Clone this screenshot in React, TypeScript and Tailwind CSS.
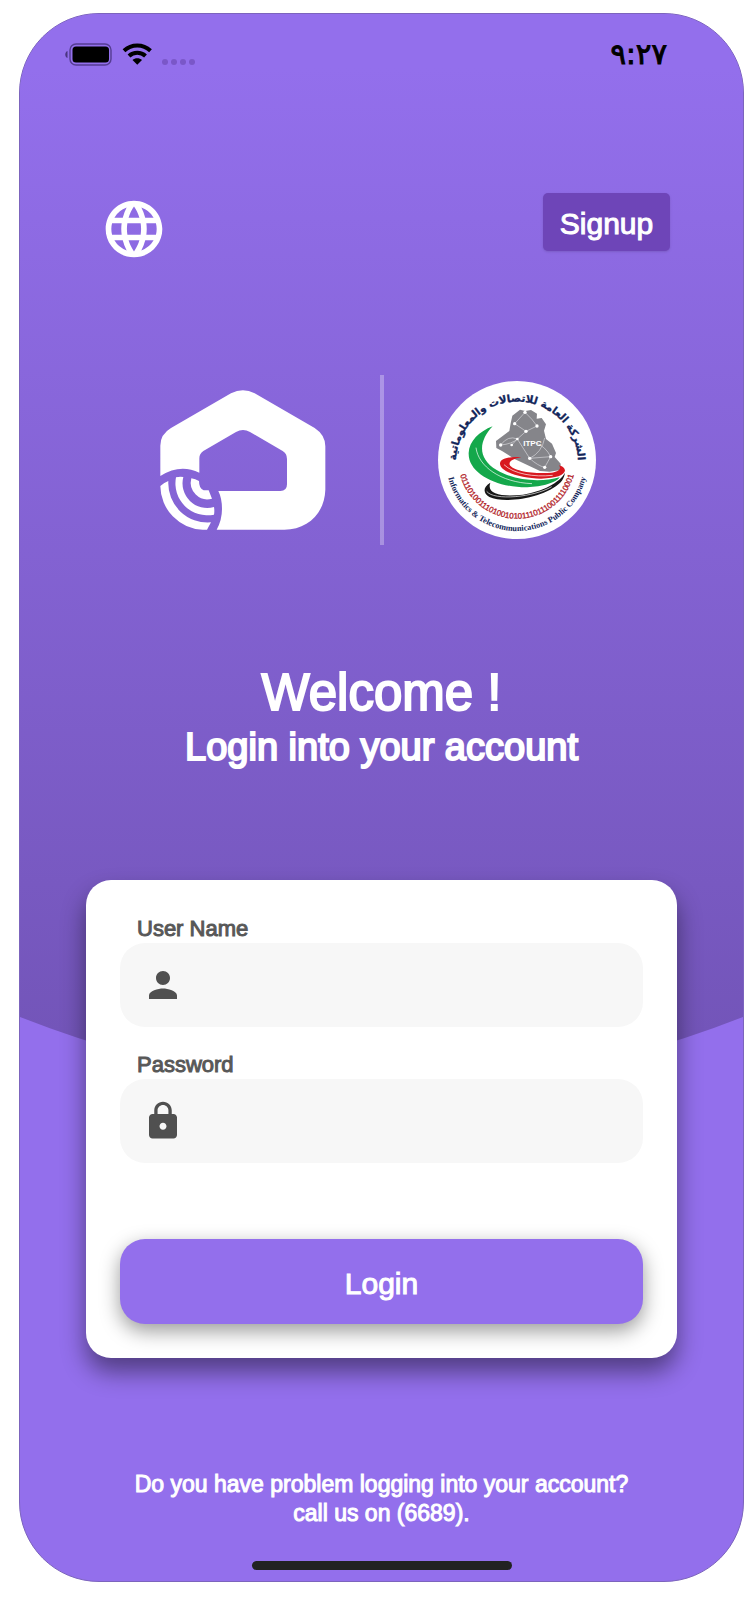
import type { FormEvent, ReactNode } from 'react'
import { useState } from 'react'
import { MdLanguage, MdLock, MdPerson } from 'react-icons/md'

// ============================================================================
// TYPES
// ============================================================================

interface FieldProps {
  id: string
  label: string
  type: 'text' | 'password'
  icon: ReactNode
  value: string
  onChange: (value: string) => void
}

// ============================================================================
// STATUS BAR
// ============================================================================

function StatusBar(): ReactNode {
  return (
    <div className="flex h-6 items-center justify-between pr-[76px] pl-11 text-black">
      <svg viewBox="0 0 132 24" className="h-6 w-[132px]" aria-hidden="true">
        {/* Battery */}
        <path d="M3.500 9C0.500 10 0.500 15 3.500 16Z" fill="#4b3581" />
        <rect x="6" y="2" width="41" height="21" rx="6" fill="none" stroke="#553d92" strokeWidth="1.4" />
        <rect x="8.500" y="4.500" width="36.500" height="16" rx="3.500" />
        {/* Wifi */}
        <g fill="none" stroke="#000" strokeWidth="4">
          <path d="M60 8.700C67.500 1.700 79 1.700 86.500 8.700" />
          <path d="M65 14C69.500 9.700 77 9.700 81.500 14" />
        </g>
        <path d="M68.500 18C71 15.600 75.500 15.600 78 18L73.250 22.800Z" />
        {/* Signal */}
        <g fill="#7a57c8">
          <circle cx="101" cy="20" r="3" />
          <circle cx="110" cy="20" r="3" />
          <circle cx="119" cy="20" r="3" />
          <circle cx="128" cy="20" r="3" />
        </g>
      </svg>
      <time dir="ltr" className="font-['DejaVu_Sans',sans-serif] text-[29px] leading-6 [-webkit-text-stroke:1px]">
        <bdo dir="ltr">٩:٢٧</bdo>
      </time>
    </div>
  )
}

// ============================================================================
// LOGOS
// ============================================================================

function HomeLogo(): ReactNode {
  return (
    <svg viewBox="62 85 498 420" className="h-[140px] w-[166px]" fill="#fff" aria-hidden="true">
      <path d="M63 343V252Q63 218 95 199L275 95Q311 77 346 95L526 199Q558 220 558 254V384C556 455 505 504 435 504H232Q248 475 248 442Q248 410 237 388H423Q443 388 443 368V292Q443 276 430 268L332 211Q311 199 290 211L192 268Q180 276 180 290V333Q122 305 63 343Z" />
      <path d="M63 373Q74 363 87 358A118 118 0 0 0 215 482L203 504H190A132 132 0 0 1 63 373Z" />
      <path d="M110 347Q121 344 132 346A74 74 0 0 0 224 436Q226 448 224 459A96 96 0 0 1 110 347Z" />
      <path d="M156 350Q168 352 179 358Q179 381 193 386H208L218 411A50 50 0 0 1 156 350Z" />
    </svg>
  )
}

function ItpcLogo(): ReactNode {
  return (
    <svg viewBox="30 30 474 474" className="size-[158px]" role="img" aria-label="ITPC">
      <defs>
        <path id="arc-top" d="M84 275A183 183 0 0 1 450 275" />
        <path id="arc-digits" d="M91 267A176 176 0 0 0 443 267" />
        <path id="arc-bottom" d="M54 267A213 213 0 0 0 480 267" />
      </defs>
      <circle cx="267" cy="267" r="237" fill="#fff" />

      {/* Map */}
      <path
        d="M253 134L276 116L292 120L309 117L327 128L326 143L341 141L354 160L348 179L354 204L372 218L384 246L380 258L398 278L397 297L365 302L336 300L258 263L222 240L205 231L204 210L227 193L244 180L248 157Z"
        fill="#85858a"
      />
      <g fill="none" stroke="#d8d8dc" strokeWidth="2">
        <path d="M260 158L294 181L268 204L305 262L368 257" />
        <path d="M291 124Q314 145 327 165L294 181" />
        <path d="M218 222Q240 192 268 204Q252 219 218 222" />
        <path d="M305 262Q342 244 350 201M305 262Q330 285 350 289L368 257Q353 227 322 214" />
        <path d="M260 158L291 124M268 204L251 222" />
      </g>
      <g fill="#fff">
        <circle cx="260" cy="158" r="5" />
        <circle cx="291" cy="124" r="5" />
        <circle cx="294" cy="181" r="5" />
        <circle cx="327" cy="165" r="5" />
        <circle cx="268" cy="204" r="4" />
        <circle cx="218" cy="222" r="5" />
        <circle cx="251" cy="222" r="4" />
        <circle cx="305" cy="262" r="5" />
        <circle cx="368" cy="257" r="5" />
        <circle cx="350" cy="289" r="5" />
      </g>
      <text
        x="313"
        y="224"
        textAnchor="middle"
        fill="#fff"
        className="font-['Liberation_Sans',sans-serif] text-[24px] font-bold"
      >
        ITPC
      </text>

      {/* Flag sweeps */}
      <path
        d="M194 166C154 181 123 211 122 246C120 308 207 350 298 349C342 347 386 335 395 319C336 335 259 329 206 297C145 260 154 208 194 166Z"
        fill="#14a84b"
      />
      <path d="M144 230C151 286 217 334 312 338" fill="none" stroke="#fff" strokeWidth="2" />
      <path
        d="M280 259C246 255 216 263 216 278C216 302 279 322 339 323C384 322 410 313 411 298C410 290 402 285 393 283C402 294 389 302 370 305C322 310 253 300 245 281C242 269 258 263 280 259Z"
        fill="#d81920"
      />
      <path d="M228 281C257 309 318 319 374 313" fill="none" stroke="#fff" strokeWidth="2" />
      <path
        d="M187 335C164 348 165 367 184 378C230 400 350 381 398 334C404 326 409 318 411 305C395 335 344 361 285 371C223 378 174 371 187 335Z"
        fill="#171717"
      />
      <path d="M176 361C197 390 318 379 371 347" fill="none" stroke="#fff" strokeWidth="2" />

      {/* Ring texts */}
      <text
        fill="#12255a"
        stroke="#12255a"
        textAnchor="middle"
        className="font-['DejaVu_Sans',sans-serif] text-[31px] font-bold"
      >
        <textPath href="#arc-top" startOffset="50%">
          الشركة العامة للاتصالات والمعلوماتية
        </textPath>
      </text>
      <text
        fill="#b3262c"
        stroke="#b3262c"
        textAnchor="middle"
        className="font-['Liberation_Sans',sans-serif] text-[24px]"
      >
        <textPath href="#arc-digits" startOffset="50%">
          011101001110100101011101110011110001
        </textPath>
      </text>
      <text
        fill="#12255a"
        textAnchor="middle"
        className="font-['Liberation_Serif',serif] text-[25px] font-bold"
      >
        <textPath href="#arc-bottom" startOffset="50%">
          Informatics &amp; Telecommunications Public Company
        </textPath>
      </text>
    </svg>
  )
}

// ============================================================================
// FORM
// ============================================================================

function Field({ id, label, type, icon, value, onChange }: FieldProps): ReactNode {
  return (
    <div>
      <label htmlFor={id} className="block pl-[17px] text-[22px] leading-[25px] text-[#585858] [-webkit-text-stroke:1px]">
        {label}
      </label>
      <div className="mt-0.5 flex h-[84px] items-center gap-4 rounded-[25px] bg-[#f7f7f7] px-[22px] text-[#505050]">
        {icon}
        <input
          id={id}
          type={type}
          value={value}
          onChange={(e) => onChange(e.target.value)}
          className="h-full min-w-0 flex-1 bg-transparent text-[22px] outline-none"
        />
      </div>
    </div>
  )
}

function LoginForm(): ReactNode {
  const [userName, setUserName] = useState('')
  const [password, setPassword] = useState('')

  function handleSubmit(e: FormEvent): void {
    e.preventDefault()
  }

  return (
    <form
      onSubmit={handleSubmit}
      className="mx-[66px] mt-[109px] rounded-[25px] bg-white px-[34px] pt-9 pb-[34px] shadow-[0_14px_24px_rgba(0,0,0,0.45)]"
    >
      <div className="flex flex-col gap-[25px]">
        <Field
          id="username"
          label="User Name"
          type="text"
          icon={<MdPerson className="size-[42px] shrink-0" />}
          value={userName}
          onChange={setUserName}
        />
        <Field
          id="password"
          label="Password"
          type="password"
          icon={<MdLock className="size-[42px] shrink-0" />}
          value={password}
          onChange={setPassword}
        />
      </div>
      <button
        type="submit"
        className="mt-[76px] h-[85px] w-full rounded-[25px] bg-[#936fec] pt-1 text-[30px] text-white shadow-[0_7px_20px_rgba(0,0,0,0.4)] [-webkit-text-stroke:1px]"
      >
        Login
      </button>
    </form>
  )
}

// ============================================================================
// PAGE
// ============================================================================

export default function App(): ReactNode {
  return (
    <div className="min-h-screen bg-white pt-[13px] pr-3 pb-[18px] pl-[19px] font-['Liberation_Sans',sans-serif]">
      <main className="relative isolate overflow-hidden rounded-[80px] border border-[#7c64bd] bg-[#936fec] pt-7 pb-[11px]">
        {/* Curved backdrop */}
        <svg
          viewBox="0 0 723 1075"
          preserveAspectRatio="none"
          className="absolute inset-x-0 top-0 -z-10 h-[1075px] w-full"
          aria-hidden="true"
        >
          <defs>
            <linearGradient id="backdrop" x1="0" y1="0" x2="0" y2="1">
              <stop offset="0.05" stopColor="#936fec" />
              <stop offset="0.95" stopColor="#7355b9" />
            </linearGradient>
          </defs>
          <path d="M0 0H723V1003Q361 1145 0 1003Z" fill="url(#backdrop)" />
        </svg>

        <StatusBar />

        {/* Header */}
        <header className="mt-[127px] flex items-end justify-between pr-[73px] pl-20">
          <button type="button" aria-label="Change language" className="text-white">
            <MdLanguage className="size-[68px]" />
          </button>
          <button
            type="button"
            className="mb-3 h-[58px] w-[127px] rounded-[5px] bg-[#6e45b8] pt-0.5 text-[30px] text-white shadow-sm [-webkit-text-stroke:1px]"
          >
            Signup
          </button>
        </header>

        {/* Logos */}
        <div className="mt-[112px] flex items-center justify-center gap-[54px] pr-2">
          <HomeLogo />
          <div className="h-[170px] w-1 bg-white/30" />
          <ItpcLogo />
        </div>

        {/* Welcome */}
        <div className="mt-[118px] text-center text-white [-webkit-text-stroke:2px]">
          <h1 className="text-[51px] leading-[60px]">Welcome !</h1>
          <p className="text-[38px] leading-[48px]">Login into your account</p>
        </div>

        <LoginForm />

        {/* Footer */}
        <p className="mt-[112px] text-center text-[23px] leading-[29px] text-white [-webkit-text-stroke:1px]">
          Do you have problem logging into your account?
          <br />
          call us on (6689).
        </p>
        <div className="mx-auto mt-[33px] h-[9px] w-[260px] rounded-full bg-[#222]" />
      </main>
    </div>
  )
}
